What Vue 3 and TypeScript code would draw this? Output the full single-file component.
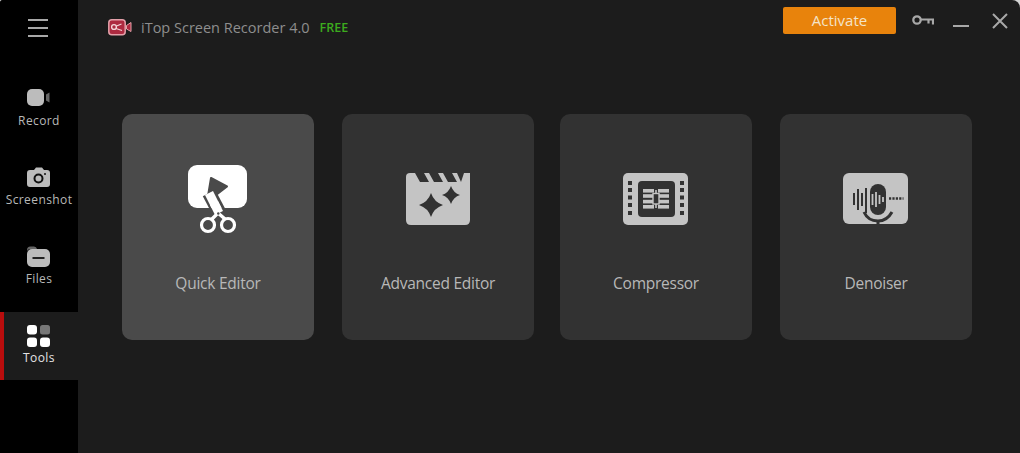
<template>
  <div class="window">
    <aside class="sidebar">
      <div class="menu-btn">
        <span></span><span></span><span></span>
      </div>
      <nav class="nav">
        <div class="nav-item">
          <svg class="nav-icon" viewBox="0 0 24 22">
            <rect x="0" y="1" width="17" height="17" rx="5" fill="#bcbcbc" />
            <path d="M19 6.5 L22.5 4.5 V14.5 L19 12.5 Z" fill="#666" />
          </svg>
          <span class="nav-label">Record</span>
        </div>
        <div class="nav-item">
          <svg class="nav-icon" viewBox="0 0 24 22">
            <path d="M3 3 H7 L9 0.5 H15 L17 3 H20 Q23 3 23 6 V17 Q23 20 20 20 H3 Q0 20 0 17 V6 Q0 3 3 3 Z" fill="#bcbcbc" />
            <circle cx="11.5" cy="11.5" r="4" fill="none" stroke="#111" stroke-width="2" />
            <circle cx="18" cy="7" r="1" fill="#111" />
          </svg>
          <span class="nav-label">Screenshot</span>
        </div>
        <div class="nav-item">
          <svg class="nav-icon" viewBox="0 0 24 22">
            <path d="M0 4 Q0 0.5 3.5 0.5 H7 Q9.5 0.5 10 3 H4 Q0 3 0 6 Z" fill="#666" />
            <rect x="0" y="3" width="23" height="18" rx="5" fill="#bcbcbc" />
            <rect x="5.5" y="11" width="12" height="2" fill="#222" />
          </svg>
          <span class="nav-label">Files</span>
        </div>
        <div class="nav-item active">
          <svg class="nav-icon" viewBox="0 0 24 22">
            <rect x="0" y="0" width="10" height="9.5" rx="3" fill="#fff" />
            <rect x="13" y="0" width="10" height="9.5" rx="2.5" fill="#777" />
            <rect x="0" y="12.5" width="10" height="9.5" rx="3" fill="#fff" />
            <rect x="13" y="12.5" width="10" height="9.5" rx="3" fill="#fff" />
          </svg>
          <span class="nav-label">Tools</span>
        </div>
      </nav>
    </aside>

    <main class="main">
      <header class="titlebar">
        <div class="brand">
          <svg class="logo" width="24" height="17" viewBox="0 0 24 17">
            <rect x="0.8" y="0.8" width="16.4" height="15" rx="3" fill="#ad2a40" stroke="#e3a0a9" stroke-width="1.5" />
            <path d="M18.5 6.5 L23 3.5 V12.5 L18.5 10 Z" fill="#ad2a40" stroke="#e3a0a9" stroke-width="1" />
            <circle cx="6" cy="8" r="2.4" fill="none" stroke="#f2d4d8" stroke-width="1.4" />
            <path d="M8.5 7 L13.5 5 M8 9.5 L14 11.5" fill="none" stroke="#f2d4d8" stroke-width="1.3" />
          </svg>
          <span class="title">iTop Screen Recorder 4.0</span>
          <span class="free">FREE</span>
        </div>
        <div class="actions">
          <button class="activate">Activate</button>
          <svg class="key" width="22" height="11" viewBox="0 0 22 11">
            <circle cx="5" cy="5" r="3.7" fill="none" stroke="#a8a8a8" stroke-width="2.3" />
            <path d="M8.5 4.5 H21 V9.5 M16.5 4.5 V8.5" fill="none" stroke="#a8a8a8" stroke-width="2.2" />
          </svg>
          <span class="minimize"></span>
          <svg class="close" width="16" height="16" viewBox="0 0 16 16">
            <path d="M1 1 L15 15 M15 1 L1 15" stroke="#a8a8a8" stroke-width="2" />
          </svg>
        </div>
      </header>

      <section class="cards">
        <div class="card selected">
          <svg class="card-icon" viewBox="0 0 100 95">
            <rect x="18" y="15" width="59" height="43" rx="9" fill="#fff" />
            <path d="M41 28 L57 36.5 L46 45 L38 46 Z" fill="#4a4a4a" stroke="#4a4a4a" stroke-width="2" stroke-linejoin="round" />
            <path d="M39 43 L49 62" stroke="#4a4a4a" stroke-width="14" />
            <path d="M39 43 L49 63" stroke="#fff" stroke-width="9" />
            <rect x="18" y="58" width="59" height="10" fill="#4a4a4a" />
            <path d="M44 53 L49 63" stroke="#fff" stroke-width="9" />
            <path d="M42 69 L48 63 L55 69" fill="none" stroke="#fff" stroke-width="3.4" />
            <circle cx="48.3" cy="63.5" r="1.2" fill="#4a4a4a" />
            <circle cx="38" cy="75" r="6.5" fill="none" stroke="#fff" stroke-width="3.2" />
            <circle cx="58" cy="75" r="6.5" fill="none" stroke="#fff" stroke-width="3.2" />
          </svg>
          <span class="card-label">Quick Editor</span>
        </div>
        <div class="card">
          <svg class="card-icon nudge-half" viewBox="0 0 85 75">
            <path d="M11 17 Q11 13 15 13 H75 V60 Q75 65 70 65 H16 Q11 65 11 60 Z" fill="#c4c4c4" />
            <path d="M20 13 H29 L34 22 H25 Z M34 13 H43 L48 22 H39 Z M48 13 H57 L62 22 H53 Z M62 13 H69 L66 22 Z" fill="#323232" />
            <path d="M36 33 Q39 42 48 45 Q39 48 36 57 Q33 48 24 45 Q33 42 36 33 Z" fill="#323232" />
            <path d="M56 26 Q58.5 33 65 35 Q58.5 37 56 44 Q53.5 37 47 35 Q53.5 33 56 26 Z" fill="#323232" />
          </svg>
          <span class="card-label">Advanced Editor</span>
        </div>
        <div class="card narrow-gap">
          <svg class="card-icon nudge" viewBox="0 0 85 75">
            <rect x="11" y="13" width="65" height="52" rx="5" fill="#c4c4c4" />
            <g fill="#323232">
              <rect x="16" y="21" width="4" height="4" />
              <rect x="16" y="28" width="4" height="4" />
              <rect x="16" y="35.5" width="4" height="4" />
              <rect x="16" y="43" width="4" height="4" />
              <rect x="16" y="51" width="4" height="4" />
              <rect x="68" y="21" width="4" height="4" />
              <rect x="68" y="28" width="4" height="4" />
              <rect x="68" y="35.5" width="4" height="4" />
              <rect x="68" y="43" width="4" height="4" />
              <rect x="68" y="51" width="4" height="4" />
              <rect x="26" y="21" width="37" height="36" rx="4" />
            </g>
            <g fill="#c4c4c4">
              <rect x="31" y="29" width="11" height="3.6" />
              <rect x="31" y="34.2" width="11" height="3.6" />
              <rect x="31" y="39.8" width="11" height="3.6" />
              <rect x="31" y="45" width="11" height="3.6" />
              <rect x="46" y="29" width="11" height="3.6" />
              <rect x="46" y="34.2" width="11" height="3.6" />
              <rect x="46" y="39.8" width="11" height="3.6" />
              <rect x="46" y="45" width="11" height="3.6" />
              <rect x="43.2" y="30" width="1.6" height="18" />
            </g>
            <rect x="41" y="33.5" width="6" height="10.5" fill="#323232" stroke="#c4c4c4" stroke-width="1.4" />
          </svg>
          <span class="card-label">Compressor</span>
        </div>
        <div class="card">
          <svg class="card-icon nudge" viewBox="0 0 85 75">
            <rect x="11" y="13" width="65" height="51" rx="6" fill="#c4c4c4" />
            <rect x="38" y="24" width="16" height="31" rx="8" fill="#323232" />
            <path d="M32 52 Q36 61 46 61 Q55 61 60 52" fill="none" stroke="#323232" stroke-width="3" />
            <path d="M46 61 V65" stroke="#323232" stroke-width="3" />
            <g stroke="#323232" stroke-width="2">
              <path d="M22 33 V45 M26 29 V50 M30 33 V46 M34 28 V53" />
            </g>
            <g stroke="#c4c4c4" stroke-width="1.8">
              <path d="M40.5 34 V45 M44 32 V47 M47.5 35 V44 M51 37 V42" />
            </g>
            <path d="M57 38.5 H71.5" stroke="#323232" stroke-width="2.5" stroke-dasharray="2.2 1.2" />
          </svg>
          <span class="card-label">Denoiser</span>
        </div>
      </section>
    </main>
  </div>
</template>

<script setup lang="ts">
</script>

<style>
html,
body {
  background: #d4d4d4;
}
</style>

<style scoped>
.window {
  display: flex;
  width: 1020px;
  height: 453px;
  overflow: hidden;
  border-radius: 3px 8px 0 0;
  background: #1c1c1c;
  font-family: "Open Sans", "Noto Sans", sans-serif;
  color: #b8b8b8;
}

.sidebar {
  width: 78px;
  flex-shrink: 0;
  background: #000;
  display: flex;
  flex-direction: column;
}

.menu-btn {
  height: 75px;
  box-sizing: border-box;
  padding: 19px 0 0 28px;
  display: flex;
  flex-direction: column;
  gap: 6px;
}

.menu-btn span {
  width: 20px;
  height: 2px;
  background: #a8a8a8;
}

.nav {
  display: flex;
  flex-direction: column;
  gap: 11px;
}

.nav-item {
  height: 68px;
  box-sizing: border-box;
  padding-top: 13px;
  display: flex;
  flex-direction: column;
  align-items: center;
  gap: 3px;
}

.nav-item.active {
  background: #1c1c1c;
  box-shadow: inset 4px 0 0 #b80d0d;
  color: #e4e4e4;
}

.nav-icon {
  width: 24px;
  height: 22px;
}

.nav-label {
  font-size: 12px;
  line-height: 16px;
  letter-spacing: 0.4px;
}

.main {
  flex: 1;
  display: flex;
  flex-direction: column;
}

.titlebar {
  height: 114px;
  box-sizing: border-box;
  padding: 7px 12px 0 30px;
  display: flex;
  justify-content: space-between;
  align-items: flex-start;
}

.brand {
  display: flex;
  align-items: center;
  height: 40px;
}

.logo {
  margin-right: 9px;
}

.title {
  font-size: 14.5px;
  color: #8e8e8e;
}

.free {
  margin-left: 10px;
  font-size: 12.5px;
  font-weight: 600;
  color: #3cab1e;
}

.actions {
  display: flex;
  align-items: center;
}

.activate {
  width: 113px;
  height: 27px;
  border: 0;
  border-radius: 2px;
  background: #e8830c;
  color: #f4e3c8;
  font-family: inherit;
  font-size: 15px;
  padding: 0 0 2px;
}

.key {
  margin-left: 16px;
}

.minimize {
  width: 16px;
  height: 2px;
  margin-left: 19px;
  margin-top: 10px;
  background: #a8a8a8;
}

.close {
  margin-left: 23px;
}

.cards {
  display: flex;
  padding-left: 44px;
}

.card {
  width: 192px;
  height: 226px;
  box-sizing: border-box;
  border-radius: 10px;
  background: #323232;
  margin-left: 28px;
  padding-top: 46px;
  display: flex;
  flex-direction: column;
  align-items: center;
}

.card:first-child {
  margin-left: 0;
}

.card.narrow-gap {
  margin-left: 26px;
}

.card.selected {
  background: #4a4a4a;
  padding-top: 36px;
}

.card-icon {
  width: 85px;
  height: 75px;
}

.card-icon.nudge {
  margin-right: 3px;
}

.card-icon.nudge-half {
  margin-right: 1px;
}

.card.selected .card-icon {
  width: 100px;
  height: 95px;
  margin-left: 4px;
}

.card-label {
  margin-top: 36px;
  font-size: 15.5px;
  line-height: 24px;
  letter-spacing: -0.25px;
  color: #b8b8b8;
}

.card.selected .card-label {
  margin-top: 26px;
}
</style>
